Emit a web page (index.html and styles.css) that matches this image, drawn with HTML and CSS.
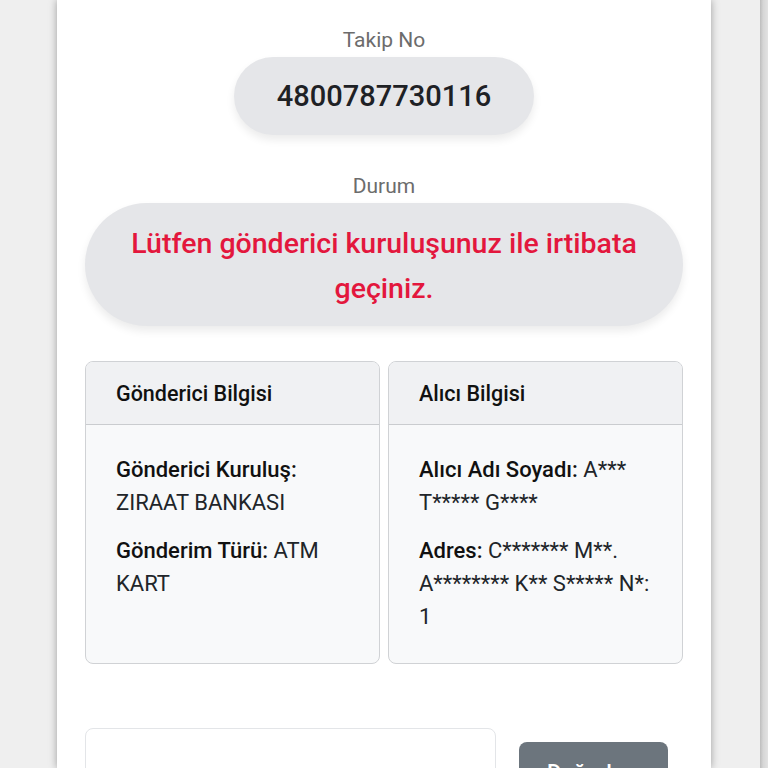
FILE: index.html
```html
<!DOCTYPE html>
<html lang="tr">
<head>
<meta charset="utf-8">
<link rel="stylesheet" href="styles.css">
</head>
<body>
<div class="page">
  <div class="gutter"></div>
  <main class="card">
    <div class="label">Takip No</div>
    <div class="pill track">4800787730116</div>
    <div class="label label-status">Durum</div>
    <div class="pill status">Lütfen gönderici kuruluşunuz ile irtibata geçiniz.</div>
    <div class="info-grid">
      <section class="info">
        <div class="info-head">Gönderici Bilgisi</div>
        <div class="info-body">
          <p><b>Gönderici Kuruluş:</b> ZIRAAT BANKASI</p>
          <p><b>Gönderim Türü:</b> ATM KART</p>
        </div>
      </section>
      <section class="info">
        <div class="info-head">Alıcı Bilgisi</div>
        <div class="info-body">
          <p><b>Alıcı Adı Soyadı:</b> A*** T***** G****</p>
          <p><b>Adres:</b> C******* M**. A******** K** S***** N*: 1</p>
        </div>
      </section>
    </div>
    <div class="actions">
      <div class="input"></div>
      <button class="btn">Doğrula</button>
    </div>
  </main>
  <div class="spacer"></div>
  <div class="edge"></div>
</div>
</body>
</html>
```

FILE: styles.css
```css
html, body {
  margin: 0;
  padding: 0;
  background: #efefef;
  font-family: Roboto, "Liberation Sans", sans-serif;
  height: 768px;
  overflow: hidden;
}
.page {
  display: flex;
  height: 768px;
}
.gutter {
  width: 57px;
  flex: none;
}
.card {
  width: 654px;
  flex: none;
  background: #fff;
  box-shadow: 0 0 8px rgba(0, 0, 0, 0.35);
  padding: 28px 28px 0;
  box-sizing: border-box;
  display: flex;
  flex-direction: column;
  align-items: center;
  overflow: hidden;
}
.card > * {
  flex: none;
}
.spacer {
  width: 49px;
  flex: none;
}
.edge {
  width: 8px;
  flex: none;
  background: linear-gradient(to right, #bdbdbd, #d6d6d6 40%, #e2e2e2);
}
.label {
  font-size: 21px;
  line-height: 24px;
  color: #6c6c6c;
  margin-bottom: 5px;
}
.label-status {
  margin-top: 39px;
}
.pill {
  background: #e5e6e9;
  border-radius: 999px;
  box-shadow: 0 5px 8px rgba(0, 0, 0, 0.08);
  box-sizing: border-box;
  text-align: center;
}
.track {
  width: 300px;
  height: 78px;
  display: flex;
  align-items: center;
  justify-content: center;
  font-size: 29px;
  font-weight: 500;
  color: #1e2125;
}
.status {
  width: 100%;
  height: 123px;
  padding: 18px 30px 0;
  font-size: 28.5px;
  line-height: 45px;
  font-weight: 500;
  color: #e3173d;
}
.info-grid {
  width: 100%;
  margin-top: 35px;
  display: grid;
  grid-template-columns: 1fr 1fr;
  gap: 8px;
}
.info {
  height: 303px;
  border: 1px solid #d0d2d5;
  border-radius: 8px;
  background: #f8f9fa;
  overflow: hidden;
  box-sizing: border-box;
  display: flex;
  flex-direction: column;
}
.info-head {
  height: 63px;
  flex: none;
  box-sizing: border-box;
  background: #f0f1f3;
  border-bottom: 1px solid #cacccf;
  padding: 0 30px;
  display: flex;
  align-items: center;
  font-size: 21.5px;
  font-weight: 500;
  color: #111;
}
.info-body {
  padding: 28px 30px 0;
}
.info-body p {
  margin: 0 0 15px;
  font-size: 22px;
  line-height: 33px;
  color: #212529;
}
.info-body b {
  font-weight: 500;
  color: #111;
}
.actions {
  width: 100%;
  margin-top: 64px;
  display: flex;
  align-items: flex-start;
  gap: 23px;
}
.input {
  width: 411px;
  height: 80px;
  border: 1px solid #e3e5e8;
  border-radius: 8px;
  background: #fff;
  box-sizing: border-box;
  flex: none;
}
.btn {
  margin-top: 14px;
  width: 149px;
  height: 60px;
  flex: none;
  border: none;
  border-radius: 8px;
  background: #6c757d;
  color: #fff;
  font-family: Roboto, "Liberation Sans", sans-serif;
  font-size: 22px;
  font-weight: 500;
  text-align: left;
  padding: 0 0 0 28px;
}
```
